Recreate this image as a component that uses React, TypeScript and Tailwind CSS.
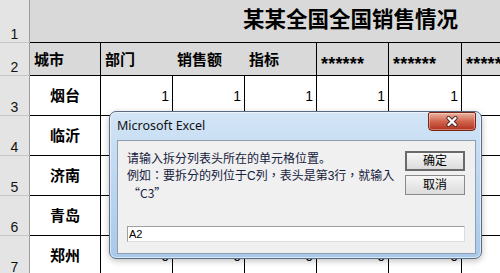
import React from 'react';

const CJK = "font-['Liberation_Sans','Noto_Sans_CJK_SC',sans-serif]";

function RowHead({ n }: { n: number }) {
  return (
    <div className={`bg-[#e4e4e4] border-r border-r-[#9c9c9c] border-b border-b-[#c6c6c6] flex items-end justify-center pb-[1px] text-[14px] leading-none text-[#111] ${CJK}`}>
      {n}
    </div>
  );
}

function HeadCell({ text, right = true, stars = false }: { text: string; right?: boolean; stars?: boolean }) {
  return (
    <div className={`bg-[#d9d9d9] border-b border-b-black ${right ? 'border-r border-r-black' : ''} flex items-center pl-[4px] text-[15px] font-bold leading-none text-black whitespace-nowrap overflow-hidden ${CJK}`}>
      {stars ? (
        <span className="relative top-[5px] text-[18px] tracking-[0.2px] font-['Liberation_Sans',sans-serif]">{text}</span>
      ) : (
        text
      )}
    </div>
  );
}

function CityCell({ text }: { text: string }) {
  return (
    <div className={`bg-white border-b border-b-black border-r border-r-black flex items-center justify-center text-[15px] font-bold leading-none text-black ${CJK}`}>
      {text}
    </div>
  );
}

function ValCell({ v, right = true }: { v: string; right?: boolean }) {
  return (
    <div className={`bg-white border-b border-b-black ${right ? 'border-r border-r-black' : ''} flex items-center justify-end pr-[3px] text-[14px] leading-none text-black ${CJK}`}>
      {v}
    </div>
  );
}

function DataRow({ n, city, v }: { n: number; city: string; v: string }) {
  return (
    <>
      <RowHead n={n} />
      <CityCell text={city} />
      <ValCell v={v} />
      <ValCell v={v} />
      <ValCell v={v} />
      <ValCell v={v} />
      <ValCell v={v} />
      <ValCell v="" right={false} />
    </>
  );
}

export default function App() {
  return (
    <div className="relative w-[500px] h-[273px] overflow-hidden bg-white">
      <div className="grid grid-cols-[30px_71px_72px_72px_72px_72px_73px_1fr] grid-rows-[43px_33px_40px_40px_40px_40px_40px]">
        <RowHead n={1} />
        <div className={`col-span-7 bg-[#d9d9d9] border-b border-b-black flex items-center pl-[213px] text-[21.5px] font-bold leading-none text-black whitespace-nowrap ${CJK}`}>
          某某全国全国销售情况
        </div>
        <RowHead n={2} />
        <HeadCell text="城市" />
        <HeadCell text="部门" right={false} />
        <HeadCell text="销售额" right={false} />
        <HeadCell text="指标" />
        <HeadCell text="******" stars />
        <HeadCell text="******" stars />
        <HeadCell text="******" stars right={false} />
        <DataRow n={3} city="烟台" v="1" />
        <DataRow n={4} city="临沂" v="1" />
        <DataRow n={5} city="济南" v="1" />
        <DataRow n={6} city="青岛" v="1" />
        <DataRow n={7} city="郑州" v="0" />
      </div>

      {/* Dialog */}
      <div className="absolute left-[109px] top-[111px] w-[373px] h-[148px] rounded-[7px] border border-[#5b6d83] bg-gradient-to-b from-[#d3e5f6] via-[#bcd6f0] to-[#a9c9ea] shadow-[inset_0_0_0_1px_rgba(255,255,255,0.55),0_2px_6px_rgba(0,0,0,0.25)] flex flex-col pl-[7px] pr-[5px] pb-[4px]">
        <div className="h-[28px] flex items-start justify-between">
          <div className="self-center text-[12.5px] leading-none text-[#111] font-['Noto_Sans','Liberation_Sans',sans-serif]">
            Microsoft Excel
          </div>
          <div className="w-[48px] h-[19px] rounded-b-[4px] rounded-t-[2px] border border-[#7a2416] bg-gradient-to-b from-[#eab3a2] via-[#d0644e] to-[#b2301c] shadow-[inset_0_0_0_1px_rgba(255,255,255,0.35)] flex items-center justify-center">
            <svg width="14" height="11" viewBox="0 0 14 11">
              <path d="M3.5 2 L10.5 9 M10.5 2 L3.5 9" stroke="#4a2a24" strokeWidth="4.2" strokeLinecap="round" />
              <path d="M3.5 2 L10.5 9 M10.5 2 L3.5 9" stroke="#ffffff" strokeWidth="2.4" strokeLinecap="round" />
            </svg>
          </div>
        </div>
        <div className="flex-1 border border-[#8f9eb0] bg-[#f0f0f0] flex flex-col pl-[9px] pr-[10px] pb-[11px]">
          <div className="flex justify-between pt-[10px]">
            <div className="text-[12px] leading-[17px] text-[#15213d] whitespace-nowrap font-['Liberation_Sans','Noto_Sans_CJK_TC',sans-serif]">
              <div className={CJK}>请输入拆分列表头所在的单元格位置。</div>
              <div>例如：要拆分的列位于C列，表头是第3行，就输入</div>
              <div className="-mt-[1px] pl-[1px] font-['Noto_Sans_CJK_SC',sans-serif]">“C3”</div>
            </div>
            <div className="flex flex-col gap-[4px]">
              <div className={`w-[60px] h-[20px] border-2 border-[#6a6a6a] bg-gradient-to-b from-[#f6f6f6] to-[#dcdcdc] flex items-center justify-center text-[12px] leading-none text-black ${CJK}`}>
                确定
              </div>
              <div className={`w-[60px] h-[20px] border border-[#8a8a8a] bg-gradient-to-b from-[#f6f6f6] to-[#dcdcdc] flex items-center justify-center text-[12px] leading-none text-black ${CJK}`}>
                取消
              </div>
            </div>
          </div>
          <div className="mt-auto h-[16px] border border-[#a0a0a0] border-b-[#dcdcdc] border-r-[#dcdcdc] bg-white flex items-center pl-[1px] text-[11px] leading-none text-black font-['Liberation_Sans',sans-serif]">
            A2
          </div>
        </div>
      </div>
    </div>
  );
}
